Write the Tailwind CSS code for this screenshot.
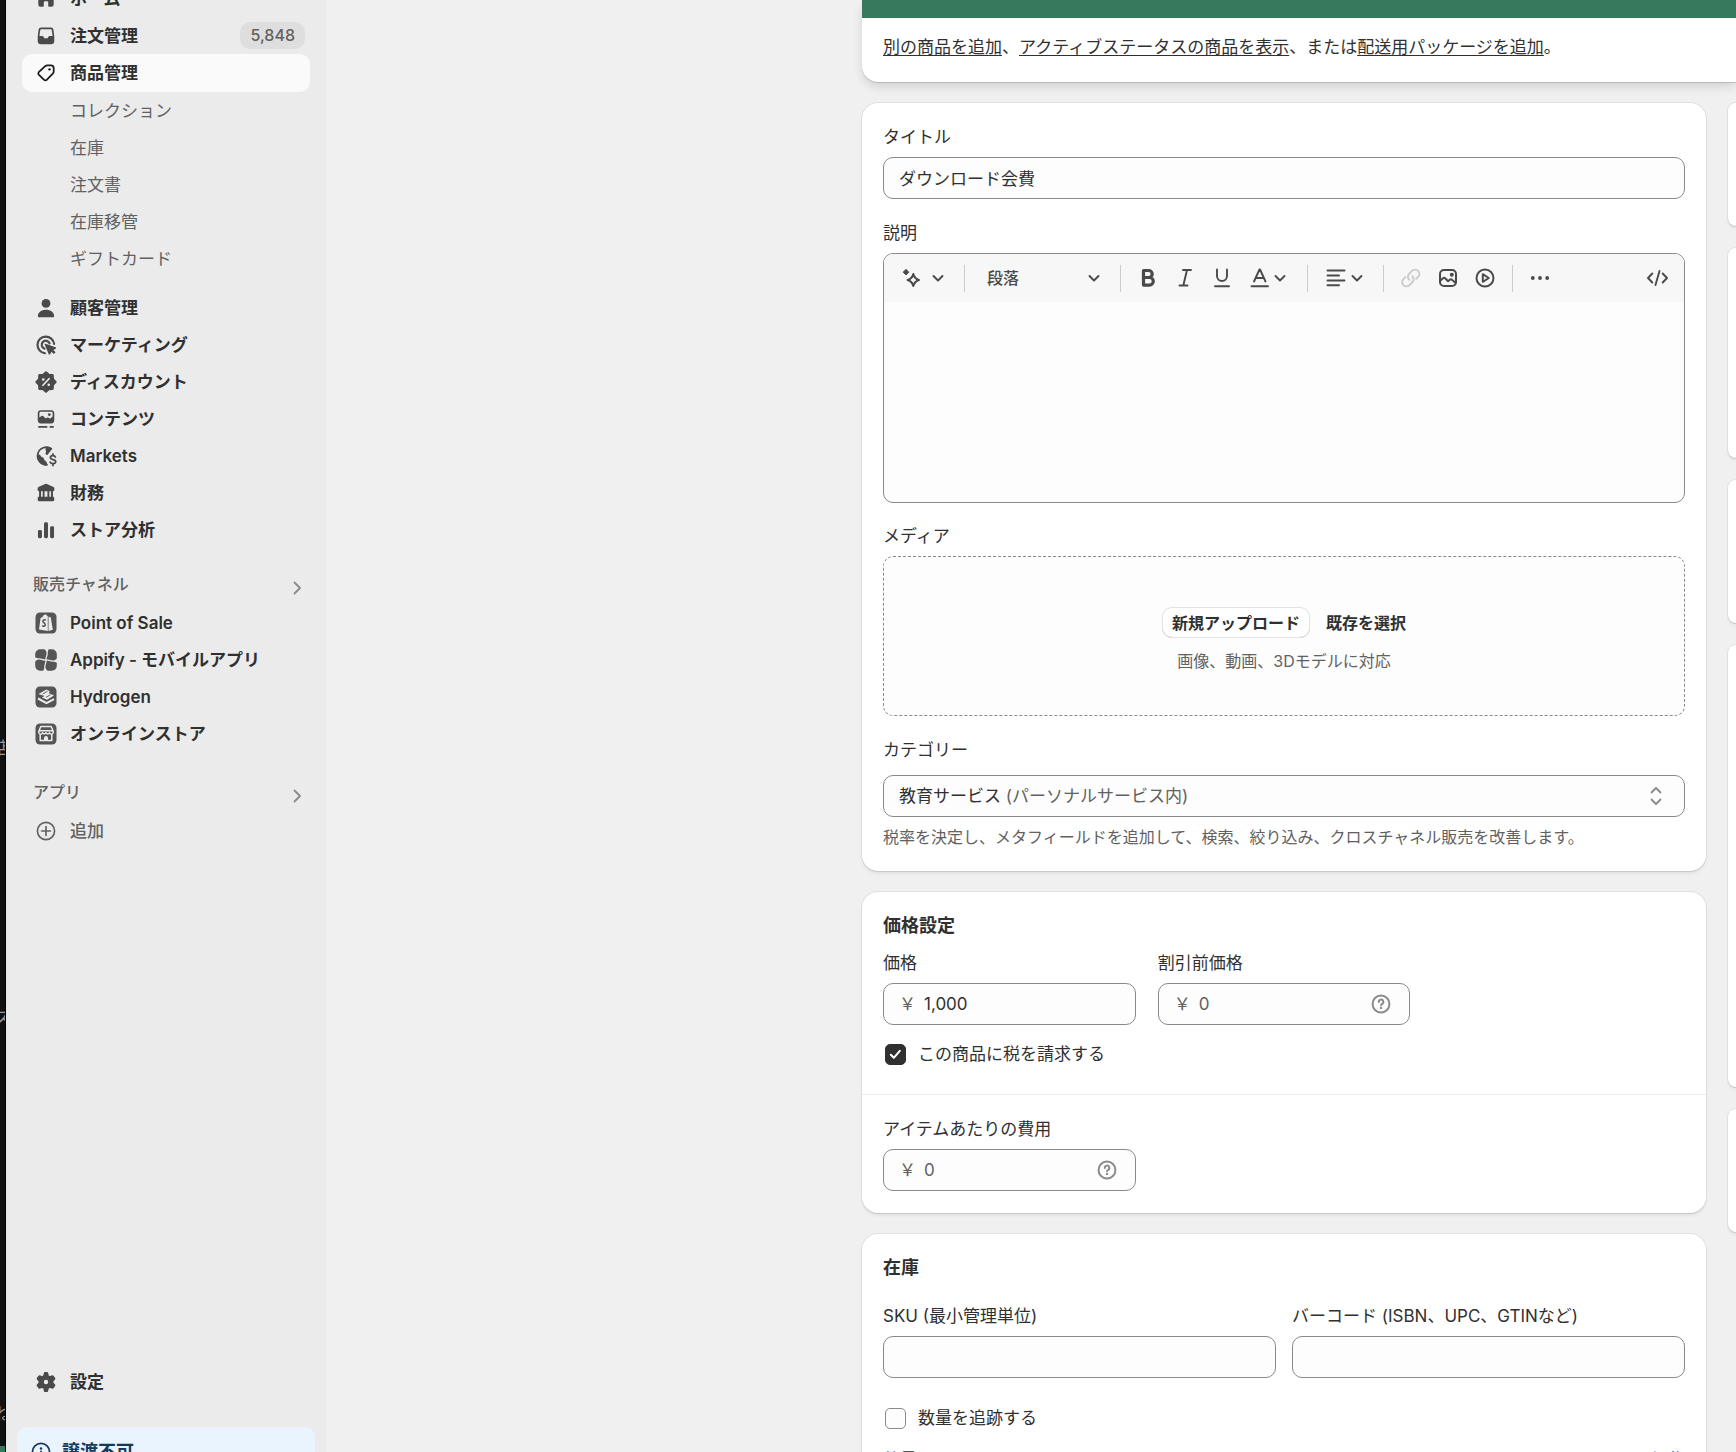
<!DOCTYPE html>
<html lang="ja">
<head>
    <meta charset="UTF-8">
    <meta name="viewport" content="width=device-width, initial-scale=1.0">
    <title>ダウンロード会費</title>
    <script src="https://cdn.jsdelivr.net/npm/@tailwindcss/browser@4"></script>
</head>
<body class="bg-[#f0f0f0] font-['Inter','Noto_Sans_CJK_JP',sans-serif] text-[17px] leading-6 text-[#303030]">

<!-- shared icons -->
<svg class="hidden" xmlns="http://www.w3.org/2000/svg">
    <symbol id="chevron-down" viewBox="0 0 16 16"><path d="M3.500 6 8 10.500 12.500 6" fill="none" stroke="currentColor" stroke-width="1.900" stroke-linecap="round" stroke-linejoin="round"/></symbol>
    <symbol id="chevron-right" viewBox="0 0 16 16"><path d="M5.500 2.500 11 8l-5.500 5.500" fill="none" stroke="currentColor" stroke-width="1.800" stroke-linecap="round" stroke-linejoin="round"/></symbol>
    <symbol id="help" viewBox="0 0 20 20"><g fill="none" stroke="currentColor" stroke-width="1.500" stroke-linecap="round" stroke-linejoin="round"><circle cx="10" cy="10" r="6.500"/><path d="M8.300 8.400a1.750 1.750 0 1 1 2.600 1.500c-.5.300-.9.600-.9 1.100"/></g><circle cx="10" cy="13" r=".9" fill="currentColor"/></symbol>
</svg>

<div class="flex h-screen overflow-hidden">
    <!-- window behind -->
    <div class="flex w-1.5 shrink-0 flex-col items-center overflow-hidden border-r border-black bg-[#111] pt-[736px] text-[#999]">
        <span>店</span>
        <span class="mt-[246px]">ス</span>
        <span class="mt-[372px]">ね</span>
        <span class="mt-auto h-1.5 w-full shrink-0 bg-[#36795c]"></span>
    </div>

    <!-- sidebar -->
    <aside class="flex w-80 shrink-0 flex-col overflow-hidden bg-[#ebebeb]">
        <nav class="-mt-5 px-4 font-semibold">
            <ul>
                <li>
                    <a href="#" class="flex h-[37px] items-center gap-[13px] rounded-[10px] px-[13px]">
                        <svg class="size-[22px] text-[#4a4a4a]" viewBox="0 0 20 20" fill="currentColor"><path d="M8.700 2.500a2 2 0 0 1 2.600 0l5 4.300c.5.400.7 1 .7 1.600V15a2 2 0 0 1-2 2h-2.200a.8.800 0 0 1-.8-.8V13a1 1 0 0 0-1-1H9a1 1 0 0 0-1 1v3.200a.8.800 0 0 1-.8.800H5a2 2 0 0 1-2-2V8.400c0-.6.300-1.200.7-1.600z"/></svg>
                        ホーム
                    </a>
                </li>
                <li>
                    <a href="#" class="flex h-[37px] items-center gap-[13px] rounded-[10px] pr-[5px] pl-[13px]">
                        <svg class="size-[22px] text-[#4a4a4a]" viewBox="0 0 20 20"><path fill="currentColor" fill-rule="evenodd" d="M5.500 2.300h9A2.200 2.200 0 0 1 16.700 4.200l.8 5.800v4.500a3 3 0 0 1-3 3h-9a3 3 0 0 1-3-3V10l.8-5.800A2.200 2.200 0 0 1 5.500 2.300zM5.600 3.800a.8.800 0 0 0-.8.700L4 10h2.500c.7 0 1.200.4 1.500 1l.2.500c.2.400.5.600.9.600h1.800c.4 0 .7-.2.900-.6l.2-.5c.3-.6.800-1 1.500-1H16l-.8-5.500a.8.800 0 0 0-.8-.7z"/></svg>
                        <span class="grow">注文管理</span>
                        <span class="rounded-[10px] bg-[#dedede] px-2.5 text-base leading-[27px] font-medium text-[#616161]">5,848</span>
                    </a>
                </li>
                <li>
                    <a href="#" class="flex h-[38px] items-center gap-[13px] rounded-[10px] bg-[#fafafa] px-[13px]">
                        <svg class="size-[22px] text-[#1a1a1a]" viewBox="0 0 20 20"><path fill="none" stroke="currentColor" stroke-width="1.600" stroke-linejoin="round" d="M11.300 3h3.200A2.500 2.500 0 0 1 17 5.500v3.200c0 .7-.3 1.400-.8 1.900l-5.600 5.700a1.600 1.600 0 0 1-2.300 0L3.400 11.500a1.600 1.600 0 0 1 0-2.200L9.300 3.800A3 3 0 0 1 11.300 3z"/><circle cx="13.200" cy="6.700" r="1.100" fill="currentColor"/></svg>
                        商品管理
                    </a>
                </li>
            </ul>
            <ul class="font-normal text-[#616161]">
                <li><a href="#" class="flex h-[37px] items-center pl-12">コレクション</a></li>
                <li><a href="#" class="flex h-[37px] items-center pl-12">在庫</a></li>
                <li><a href="#" class="flex h-[37px] items-center pl-12">注文書</a></li>
                <li><a href="#" class="flex h-[37px] items-center pl-12">在庫移管</a></li>
                <li><a href="#" class="flex h-[37px] items-center pl-12">ギフトカード</a></li>
            </ul>
            <ul class="mt-3">
                <li>
                    <a href="#" class="flex h-[37px] items-center gap-[13px] px-[13px]">
                        <svg class="size-[22px] text-[#4a4a4a]" viewBox="0 0 20 20" fill="currentColor"><circle cx="10" cy="5.800" r="4"/><path d="M2.600 17.200c0-3.400 3.300-5.700 7.400-5.700s7.400 2.300 7.400 5.700c0 .7-.5 1.100-1.100 1.100H3.700c-.6 0-1.100-.4-1.100-1.100z"/></svg>
                        顧客管理
                    </a>
                </li>
                <li>
                    <a href="#" class="flex h-[37px] items-center gap-[13px] px-[13px]">
                        <svg class="size-[22px] text-[#4a4a4a]" viewBox="0 0 20 20"><g fill="none" stroke="currentColor" stroke-width="2" stroke-linecap="round"><path d="M17.400 9A7.600 7.600 0 1 0 9 17.500"/><path d="M13.300 8.600A3.700 3.700 0 1 0 8.600 13.300"/></g><path fill="currentColor" d="M9.600 8.900 18.700 12c.7.200.7 1.100.1 1.400l-2.100 1.100 2 2-1.700 1.700-2-2-1.200 2.100c-.3.600-1.200.5-1.400-.1L8.900 9.700c-.2-.5.200-1 .7-.8z"/></svg>
                        マーケティング
                    </a>
                </li>
                <li>
                    <a href="#" class="flex h-[37px] items-center gap-[13px] px-[13px]">
                        <svg class="size-[22px] text-[#4a4a4a]" viewBox="0 0 20 20"><path fill="currentColor" stroke="currentColor" stroke-width="2" stroke-linejoin="round" d="M10 1.300 12.500 3.500 16 3.700 16.300 7.400 18.700 10 16.300 12.600 16 16.200 12.500 16.500 10 18.700 7.500 16.500 4 16.200 3.700 12.600 1.300 10 3.700 7.400 4 3.700 7.500 3.500z"/><path d="m12.800 7-5.600 6" stroke="#ebebeb" stroke-width="1.500" stroke-linecap="round"/><circle cx="7.500" cy="7.700" r="1.200" fill="#ebebeb"/><circle cx="12.500" cy="12.500" r="1.200" fill="#ebebeb"/></svg>
                        ディスカウント
                    </a>
                </li>
                <li>
                    <a href="#" class="flex h-[37px] items-center gap-[13px] px-[13px]">
                        <svg class="size-[22px] text-[#4a4a4a]" viewBox="0 0 20 20"><path fill="currentColor" fill-rule="evenodd" d="M5.300 2h9.400a2.800 2.800 0 0 1 2.800 2.800v6.400a2.800 2.800 0 0 1-2.800 2.800H5.300a2.800 2.800 0 0 1-2.800-2.800V4.800A2.800 2.800 0 0 1 5.300 2zM5.300 3.500c-.8 0-1.300.5-1.300 1.300v3.900l1.600-1.200c.7-.5 1.500-.5 2.100.1l1.500 1.400c.5.500 1 .4 1.400 0 .7-.6 1.700-.5 2.300.1l.7.700 2.400-2V4.800c0-.8-.5-1.300-1.300-1.300z"/><circle cx="13" cy="6" r="1.300" fill="currentColor"/><path d="M3.700 17.200h6.800M14 17.200h2.400" stroke="currentColor" stroke-width="1.700" stroke-linecap="round"/></svg>
                        コンテンツ
                    </a>
                </li>
                <li>
                    <a href="#" class="flex h-[37px] items-center gap-[13px] px-[13px]">
                        <svg class="size-[22px] text-[#4a4a4a]" viewBox="0 0 20 20"><path d="M14.800 3.400A8 8 0 1 0 11 18" fill="none" stroke="currentColor" stroke-width="1.500" stroke-linecap="round"/><path fill="currentColor" d="M2 8.300c1.500 0 2.800.5 3.300 1.700.3.800 1.300.9 2 1.300 1 .6.700 1.700 1.500 2.500.9.900 2.200 1.600 2.200 3.200v1.500C5.500 18.500 1.600 14.500 2 8.300zM10.500 1.700c2 0 3.800.6 5.200 1.800L12.500 7.500c-.5.600-.8 1.600-1.800 1.500-1.200-.2-1.500-1.500-.8-2.400.8-1-.6-1.600-.4-2.900z"/><path d="M16.300 8v1.500m0 7.500v1.700M18.500 10.900c-.3-.9-1.100-1.300-2.200-1.300-1.400 0-2.300.7-2.300 1.800 0 2.600 4.800 1 4.800 3.700 0 1.200-1 1.900-2.500 1.900-1.200 0-2.100-.5-2.500-1.400" fill="none" stroke="currentColor" stroke-width="1.600" stroke-linecap="round"/></svg>
                        Markets
                    </a>
                </li>
                <li>
                    <a href="#" class="flex h-[37px] items-center gap-[13px] px-[13px]">
                        <svg class="size-[22px] text-[#4a4a4a]" viewBox="0 0 20 20" fill="currentColor"><path d="M9.200 1.800a2 2 0 0 1 1.600 0l6 2.700c.5.200.8.700.8 1.300v1.500c0 .6-.5 1.100-1.100 1.100h-13c-.6 0-1.100-.5-1.100-1.100V5.800c0-.6.300-1.100.8-1.300zM3.700 8h1.800v6H3.700zM7 8h1.700v6H7zM11.300 8H13v6h-1.700zM14.500 8h1.800v6h-1.800zM3.700 13.500h12.600c.7 0 1.200.5 1.200 1.200v1.700c0 .6-.4 1-1 1h-13c-.6 0-1-.4-1-1v-1.700c0-.7.5-1.200 1.200-1.200z"/></svg>
                        財務
                    </a>
                </li>
                <li>
                    <a href="#" class="flex h-[37px] items-center gap-[13px] px-[13px]">
                        <svg class="size-[22px] text-[#4a4a4a]" viewBox="0 0 20 20" fill="currentColor"><rect x="2.700" y="10" width="3.600" height="7.500" rx="1.300"/><rect x="8.200" y="3" width="3.600" height="14.500" rx="1.300"/><rect x="13.700" y="6.500" width="3.600" height="11" rx="1.300"/></svg>
                        ストア分析
                    </a>
                </li>
            </ul>

            <a href="#" class="mt-5 flex h-9 items-center justify-between pr-[5px] pl-[11px] text-base font-medium text-[#616161]">
                <span class="mb-1">販売チャネル</span>
                <svg class="mt-1 size-4 text-[#8a8a8a]"><use href="#chevron-right"/></svg>
            </a>
            <ul>
                <li>
                    <a href="#" class="flex h-[37px] items-center gap-[13px] px-[13px]">
                        <svg class="size-[22px] text-[#555]" viewBox="0 0 22 22"><rect x=".5" y=".5" width="21" height="21" rx="4.500" fill="currentColor"/><path fill="#ebebeb" d="M5.600 5.800 7.500 5.200C8 3.600 9 2.500 10.300 2.500c.9 0 1.500.5 1.900 1.400l.6 0V19L4 17.400zM13.500 4.500l2.300 1 2 12.300-4.300 1.200z"/><path d="M10.900 8.100c-1.400-.7-3.100-.1-3 1.300.1 1.400 2.500 1.700 2.400 3.500-.1 1.400-1.800 1.800-3.200.7" fill="none" stroke="currentColor" stroke-width="1.500"/></svg>
                        Point of Sale
                    </a>
                </li>
                <li>
                    <a href="#" class="flex h-[37px] items-center gap-[13px] px-[13px]">
                        <svg class="size-[22px] text-[#555]" viewBox="0 0 22 22"><rect x=".2" y=".2" width="21.600" height="21.600" rx="5" fill="currentColor"/><g fill="none" stroke="#ebebeb" stroke-width="1.300"><path d="M11 11c-.8-2 2.800-6 .5-11"/><path d="M11 11c-.8-2 2.800-6 .5-11" transform="rotate(90 11 11)"/><path d="M11 11c-.8-2 2.800-6 .5-11" transform="rotate(180 11 11)"/><path d="M11 11c-.8-2 2.800-6 .5-11" transform="rotate(270 11 11)"/></g><g fill="#ebebeb"><path d="M9-.5h5L12.300 3.500z"/><path d="M9-.5h5L12.300 3.500z" transform="rotate(90 11 11)"/><path d="M9-.5h5L12.300 3.500z" transform="rotate(180 11 11)"/><path d="M9-.5h5L12.300 3.500z" transform="rotate(270 11 11)"/></g></svg>
                        Appify - モバイルアプリ
                    </a>
                </li>
                <li>
                    <a href="#" class="flex h-[37px] items-center gap-[13px] px-[13px]">
                        <svg class="size-[22px] text-[#555]" viewBox="0 0 22 22"><rect x=".5" y=".5" width="21" height="21" rx="4.500" fill="currentColor"/><path fill="#ebebeb" d="m11.500 3.500 3.500 2-1.500 1.500 5.500 2.500-7 4.300-5-2.300 2.500-1.500-6-2z"/><path d="m3 12.500 8.500 4.600 7.500-4" fill="none" stroke="#ebebeb" stroke-width="2"/><path d="m7.500 8 5-2.700m-1.500 6 4.500-2.600" stroke="currentColor" stroke-width=".9"/></svg>
                        Hydrogen
                    </a>
                </li>
                <li>
                    <a href="#" class="flex h-[37px] items-center gap-[13px] px-[13px]">
                        <svg class="size-[22px] text-[#555]" viewBox="0 0 22 22"><rect x=".5" y=".5" width="21" height="21" rx="4.500" fill="currentColor"/><g fill="none" stroke="#ebebeb" stroke-width="1.500" stroke-linejoin="round"><path d="M5.800 3.500h10.400l2 4.700v1.500a1.900 1.900 0 0 1-3.700 0 1.900 1.900 0 0 1-3.500 0 1.900 1.900 0 0 1-3.500 0 1.900 1.900 0 0 1-3.700 0V8.200zM3.800 7.800h14.400M5.200 11.500v6h11.600v-6"/></g><path d="M9 17.500V15a2 2 0 0 1 4 0v2.500z" fill="#ebebeb"/></svg>
                        オンラインストア
                    </a>
                </li>
            </ul>

            <a href="#" class="mt-6 flex h-9 items-center justify-between pr-[5px] pl-[11px] text-base font-medium text-[#616161]">
                <span class="mb-1">アプリ</span>
                <svg class="mt-1 size-4 text-[#8a8a8a]"><use href="#chevron-right"/></svg>
            </a>
            <a href="#" class="flex h-[37px] items-center gap-[13px] px-[13px] font-medium text-[#616161]">
                <svg class="size-[22px]" viewBox="0 0 20 20" fill="none" stroke="currentColor" stroke-width="1.500" stroke-linecap="round"><circle cx="10" cy="10" r="7.800"/><path d="M10 6v8M6 10h8"/></svg>
                追加
            </a>
        </nav>

        <a href="#" class="mt-auto flex h-[37px] items-center gap-[13px] px-[29px] font-semibold">
            <svg class="size-[22px] text-[#4a4a4a]" viewBox="0 0 20 20"><path fill="currentColor" stroke="currentColor" stroke-width="2" stroke-linejoin="round" fill-rule="evenodd" d="M9 2h2l.6 2.700 1.900 1L16 4.800l1.500 2.200-1.700 2v2l1.700 2-1.500 2.200-2.500-.9-1.900 1L11 18H9l-.6-2.700-1.900-1-2.500.9L2.500 13l1.700-2V9L2.500 7 4 4.800l2.500.9 1.900-1z"/><circle cx="10" cy="10" r="2" fill="#ebebeb"/></svg>
            設定
        </a>
        <div class="mx-[11px] mt-[27px] -mb-6 flex h-[49px] shrink-0 items-center gap-2.5 rounded-[10px] bg-[#eaf4ff] px-[13px] text-lg font-bold text-[#14395b]">
            <svg class="size-[22px]" viewBox="0 0 20 20"><circle cx="10" cy="10" r="7.800" fill="none" stroke="currentColor" stroke-width="1.600"/><path d="M10 9.500V14" stroke="currentColor" stroke-width="1.600" stroke-linecap="round"/><circle cx="10" cy="6.800" r="1.100" fill="currentColor"/></svg>
            譲渡不可
        </div>
    </aside>

    <!-- product page -->
    <main class="min-w-0 grow pl-[536px]">
        <section class="rounded-bl-2xl bg-white shadow-[0_1px_0_#bbb,0_5px_12px_-2px_rgba(0,0,0,0.16)]">
            <div class="h-[18px] bg-[#36795c]"></div>
            <p class="px-[21px] pt-[17px] pb-[23px]"><a href="#" class="underline underline-offset-2">別の商品を追加</a>、<a href="#" class="underline underline-offset-2">アクティブステータスの商品を表示</a>、または<a href="#" class="underline underline-offset-2">配送用パッケージを追加</a>。</p>
        </section>

        <div class="mt-[21px] grid grid-cols-[minmax(0,1fr)_8px] gap-[22px]">
            <form class="flex flex-col gap-[21px]">
                <section class="rounded-2xl bg-white px-[21px] py-[22px] shadow-[0_1px_0_#c8c8c8,0_0_0_1px_rgba(0,0,0,0.06),0_3px_3px_rgba(0,0,0,0.05)]">
                    <label for="title" class="block">タイトル</label>
                    <input id="title" type="text" value="ダウンロード会費" class="mt-2 h-[42px] w-full rounded-[10px] border border-[#8a8a8a] bg-[#fdfdfd] px-[15px] pb-0.5">

                    <label for="description" class="mt-[22px] block">説明</label>
                    <div class="mt-2 overflow-hidden rounded-[10px] border border-[#8a8a8a] bg-[#fdfdfd]">
                        <div class="flex h-12 items-center bg-[#f7f7f7] pr-3.5 pl-3.5 text-[#4a4a4a]">
                            <button type="button" class="flex items-center gap-1.5" aria-label="AI">
                                <svg class="size-[26px]" viewBox="0 0 26 26"><path d="M15.300 9c.8 3.500 2 4.900 5.700 6-3.700 1.100-4.900 2.500-5.700 6-.8-3.500-2-4.900-5.700-6 3.700-1.100 4.900-2.500 5.700-6z" fill="none" stroke="currentColor" stroke-width="2" stroke-linejoin="round"/><path d="M8 4.300 10.800 7.200 8 10 5.200 7.200z" fill="currentColor" stroke="currentColor" stroke-linejoin="round"/></svg>
                                <svg class="size-4"><use href="#chevron-down"/></svg>
                            </button>
                            <span class="mr-3.5 ml-[18px] h-[27px] w-px bg-[#ccc]"></span>
                            <div class="grid w-[123px] items-center">
                                <select aria-label="書式" class="col-start-1 row-start-1 appearance-none pl-2 text-base font-medium">
                                    <option>段落</option>
                                </select>
                                <svg class="pointer-events-none col-start-1 row-start-1 size-4 justify-self-end"><use href="#chevron-down"/></svg>
                            </div>
                            <span class="mr-3.5 ml-[18px] h-[27px] w-px bg-[#ccc]"></span>
                            <div class="flex gap-[11px]">
                                <button type="button" aria-label="太字">
                                    <svg class="size-[26px]" viewBox="0 0 26 26" fill="none" stroke="currentColor" stroke-width="3.200" stroke-linejoin="round"><path d="M8.500 5.500h5.200a3.500 3.500 0 0 1 0 7H8.500zM8.500 12.500h6a3.800 3.800 0 0 1 0 7.600h-6z"/></svg>
                                </button>
                                <button type="button" aria-label="斜体">
                                    <svg class="size-[26px]" viewBox="0 0 26 26" fill="none" stroke="currentColor" stroke-width="1.900" stroke-linecap="round"><path d="M11 5h8M7.500 20.500h8M15 5l-3.700 15.500"/></svg>
                                </button>
                                <button type="button" aria-label="下線">
                                    <svg class="size-[26px]" viewBox="0 0 26 26" fill="none" stroke="currentColor" stroke-width="1.900" stroke-linecap="round"><path d="M8 4.500V11a5 5 0 0 0 10 0V4.500M6 21.200h14"/></svg>
                                </button>
                                <button type="button" class="flex items-center" aria-label="文字色">
                                    <svg class="size-[26px]" viewBox="0 0 26 26" fill="none" stroke="currentColor" stroke-width="1.900" stroke-linecap="round" stroke-linejoin="round"><path d="M8 16.500 13.500 4.500h.5l5.500 12M9.800 13h8M5.500 21.200h16.500"/></svg>
                                    <svg class="size-4"><use href="#chevron-down"/></svg>
                                </button>
                            </div>
                            <span class="mr-[15px] ml-[19px] h-[27px] w-px bg-[#ccc]"></span>
                            <button type="button" class="flex items-center" aria-label="配置">
                                <svg class="size-[26px]" viewBox="0 0 26 26" fill="none" stroke="currentColor" stroke-width="1.900" stroke-linecap="round"><path d="M4.500 5.500h17M4.500 10.500h11.500M4.500 15.500h17M4.500 20.300h11.500"/></svg>
                                <svg class="size-4"><use href="#chevron-down"/></svg>
                            </button>
                            <span class="mr-3.5 ml-[18px] h-[27px] w-px bg-[#ccc]"></span>
                            <div class="flex gap-[11px]">
                                <button type="button" aria-label="リンク" disabled class="text-[#ccc]">
                                    <svg class="size-[26px]" viewBox="0 0 26 26" fill="none" stroke="currentColor" stroke-width="2" stroke-linecap="round"><path d="M11.200 14.800a4.200 4.200 0 0 1 0-6l2.900-2.900a4.200 4.200 0 0 1 6 6l-1.900 1.900M14.300 11.200a4.200 4.200 0 0 1 0 6l-2.900 2.900a4.200 4.200 0 0 1-6-6l1.900-1.900"/></svg>
                                </button>
                                <button type="button" aria-label="画像">
                                    <svg class="size-[26px]" viewBox="0 0 26 26" fill="none" stroke="currentColor" stroke-width="2" stroke-linecap="round" stroke-linejoin="round"><rect x="5" y="5" width="16" height="16" rx="4"/><path d="m5.500 15.500 2.500-2.300c.7-.6 1.500-.6 2.100 0l3 3.100 1.700-1.500c.7-.6 1.500-.6 2.100 0l3.600 2.900"/><circle cx="16.800" cy="9.800" r="1" fill="currentColor"/></svg>
                                </button>
                                <button type="button" aria-label="動画">
                                    <svg class="size-[26px]" viewBox="0 0 26 26" fill="none" stroke="currentColor" stroke-width="2" stroke-linejoin="round"><circle cx="13" cy="13" r="8.500"/><path d="M10.800 9.200v7.600l6-3.800z"/></svg>
                                </button>
                            </div>
                            <span class="mx-3.5 h-[27px] w-px bg-[#ccc]"></span>
                            <button type="button" aria-label="その他">
                                <svg class="size-[26px]" viewBox="0 0 26 26" fill="currentColor"><circle cx="5.800" cy="13" r="1.900"/><circle cx="13" cy="13" r="1.900"/><circle cx="20.200" cy="13" r="1.900"/></svg>
                            </button>
                            <button type="button" class="ml-auto" aria-label="HTMLを表示">
                                <svg class="size-[26px]" viewBox="0 0 26 26" fill="none" stroke="currentColor" stroke-width="1.900" stroke-linecap="round" stroke-linejoin="round"><path d="M8.300 8.500 4 13l4.300 4.500M18.700 8.500 23 13l-4.300 4.500M15.500 6l-4 14"/></svg>
                            </button>
                        </div>
                        <textarea id="description" class="block h-[200px] w-full resize-none px-4 py-3"></textarea>
                    </div>

                    <h3 class="mt-[21px]">メディア</h3>
                    <div class="mt-2 flex flex-col items-center rounded-[10px] border border-dashed border-[#8a8a8a] bg-[#fdfdfd] pt-[50px] pb-[42px] text-base leading-6">
                        <div class="flex items-center gap-4 font-semibold">
                            <button type="button" class="h-[31px] rounded-[10px] bg-white px-2.5 shadow-[inset_0_0_0_1px_#e3e3e3,inset_0_-1px_0_#b5b5b5]">新規アップロード</button>
                            <button type="button">既存を選択</button>
                        </div>
                        <p class="mt-[11px] text-[#616161]">画像、動画、3Dモデルに対応</p>
                    </div>

                    <label for="category" class="mt-[22px] block">カテゴリー</label>
                    <button id="category" type="button" aria-haspopup="listbox" class="mt-[13px] flex h-[42px] w-full items-center justify-between rounded-[10px] border border-[#8a8a8a] bg-[#fdfdfd] px-[15px]">
                        <span>教育サービス <span class="text-[#616161]">(パーソナルサービス内)</span></span>
                        <svg class="size-[26px] text-[#8a8a8a]" viewBox="0 0 26 26" fill="none" stroke="currentColor" stroke-width="1.800" stroke-linecap="round" stroke-linejoin="round"><path d="m8.500 9.500 4.500-4.500 4.500 4.500M8.500 16.500l4.500 4.500 4.500-4.500"/></svg>
                    </button>
                    <p class="mt-2 text-base leading-6 text-[#616161]">税率を決定し、メタフィールドを追加して、検索、絞り込み、クロスチャネル販売を改善します。</p>
                </section>

                <section class="rounded-2xl bg-white shadow-[0_1px_0_#c8c8c8,0_0_0_1px_rgba(0,0,0,0.06),0_3px_3px_rgba(0,0,0,0.05)]">
                    <div class="px-[21px] pt-[22px] pb-7">
                        <h2 class="text-lg leading-6 font-semibold">価格設定</h2>
                        <div class="mt-[13px] grid grid-cols-3 gap-[22px]">
                            <div>
                                <label for="price" class="block">価格</label>
                                <div class="mt-2 flex h-[42px] items-center gap-2 rounded-[10px] border border-[#8a8a8a] bg-[#fdfdfd] px-[15px]">
                                    <span class="text-[#616161]">￥</span>
                                    <input id="price" type="text" value="1,000" class="w-full min-w-0">
                                </div>
                            </div>
                            <div>
                                <label for="compare-price" class="block">割引前価格</label>
                                <div class="mt-2 flex h-[42px] items-center gap-2 rounded-[10px] border border-[#8a8a8a] bg-[#fdfdfd] px-[15px]">
                                    <span class="text-[#616161]">￥</span>
                                    <input id="compare-price" type="text" placeholder="0" class="w-full min-w-0 placeholder:text-[#616161]">
                                    <svg class="size-[26px] shrink-0 text-[#8a8a8a]"><use href="#help"/></svg>
                                </div>
                            </div>
                        </div>
                        <label class="mt-[17px] ml-0.5 flex items-center gap-3">
                            <span class="grid">
                                <input type="checkbox" checked class="peer col-start-1 row-start-1 size-[21px] appearance-none rounded-[5px] border border-[#8a8a8a] checked:border-[#303030] checked:bg-[#303030]">
                                <svg class="invisible col-start-1 row-start-1 size-[21px] text-white peer-checked:visible" viewBox="0 0 21 21" fill="none" stroke="currentColor" stroke-width="2" stroke-linecap="round" stroke-linejoin="round"><path d="m5.800 10.800 3 3 6-7"/></svg>
                            </span>
                            この商品に税を請求する
                        </label>
                    </div>
                    <div class="grid grid-cols-3 gap-[22px] border-t border-[#ebebeb] px-[21px] py-[22px]">
                        <div>
                            <label for="cost" class="block">アイテムあたりの費用</label>
                            <div class="mt-2 flex h-[42px] items-center gap-2 rounded-[10px] border border-[#8a8a8a] bg-[#fdfdfd] px-[15px]">
                                <span class="text-[#616161]">￥</span>
                                <input id="cost" type="text" placeholder="0" class="w-full min-w-0 placeholder:text-[#616161]">
                                <svg class="size-[26px] shrink-0 text-[#8a8a8a]"><use href="#help"/></svg>
                            </div>
                        </div>
                    </div>
                </section>

                <section class="rounded-2xl bg-white px-[21px] py-[22px] shadow-[0_1px_0_#c8c8c8,0_0_0_1px_rgba(0,0,0,0.06),0_3px_3px_rgba(0,0,0,0.05)]">
                    <h2 class="text-lg leading-6 font-semibold">在庫</h2>
                    <div class="mt-6 grid grid-cols-2 gap-4">
                        <div>
                            <label for="sku" class="block">SKU (最小管理単位)</label>
                            <input id="sku" type="text" class="mt-2 h-[42px] w-full rounded-[10px] border border-[#8a8a8a] bg-[#fdfdfd] px-[15px]">
                        </div>
                        <div>
                            <label for="barcode" class="block">バーコード (ISBN、UPC、GTINなど)</label>
                            <input id="barcode" type="text" class="mt-2 h-[42px] w-full rounded-[10px] border border-[#8a8a8a] bg-[#fdfdfd] px-[15px]">
                        </div>
                    </div>
                    <label class="mt-7 ml-0.5 flex items-center gap-3">
                        <input type="checkbox" class="size-[21px] appearance-none rounded-[5px] border border-[#8a8a8a] bg-[#fdfdfd] checked:bg-[#303030]">
                        数量を追跡する
                    </label>
                    <div class="mt-[18px] flex justify-between">
                        <h3>数量</h3>
                        <a href="#" class="text-[#005bd3]">編集</a>
                    </div>
                </section>
            </form>

            <!-- right column, cut by the window edge -->
            <div class="flex flex-col gap-[22px]">
                <section class="h-[123px] rounded-l-2xl bg-white shadow-[0_1px_0_#c8c8c8,0_0_0_1px_rgba(0,0,0,0.06),0_3px_3px_rgba(0,0,0,0.05)]"></section>
                <section class="h-[210px] rounded-l-2xl bg-white shadow-[0_1px_0_#c8c8c8,0_0_0_1px_rgba(0,0,0,0.06),0_3px_3px_rgba(0,0,0,0.05)]"></section>
                <section class="h-[143px] rounded-l-2xl bg-white shadow-[0_1px_0_#c8c8c8,0_0_0_1px_rgba(0,0,0,0.06),0_3px_3px_rgba(0,0,0,0.05)]"></section>
                <section class="h-[442px] rounded-l-2xl bg-white shadow-[0_1px_0_#c8c8c8,0_0_0_1px_rgba(0,0,0,0.06),0_3px_3px_rgba(0,0,0,0.05)]"></section>
                <section class="h-[123px] rounded-l-2xl bg-white shadow-[0_1px_0_#c8c8c8,0_0_0_1px_rgba(0,0,0,0.06),0_3px_3px_rgba(0,0,0,0.05)]"></section>
            </div>
        </div>
    </main>
</div>
</body>
</html>
